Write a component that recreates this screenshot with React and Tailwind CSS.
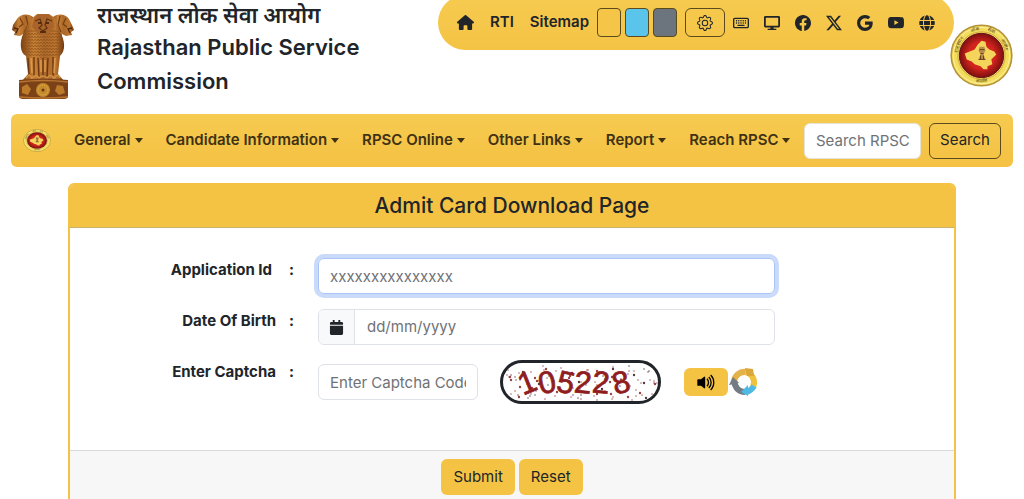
import { useState } from 'react';
import { BsGear, BsFacebook, BsTwitterX, BsGoogle, BsYoutube, BsVolumeUpFill } from 'react-icons/bs';
import { FaDesktop, FaGlobe, FaCalendar } from 'react-icons/fa';
import { FaHouse, FaRegKeyboard } from 'react-icons/fa6';

const menus = ['General', 'Candidate Information', 'RPSC Online', 'Other Links', 'Report', 'Reach RPSC'];

const socials = [
    { label: 'On-screen keyboard', icon: FaRegKeyboard },
    { label: 'Screen reader', icon: FaDesktop },
    { label: 'Facebook', icon: BsFacebook },
    { label: 'X', icon: BsTwitterX },
    { label: 'Google', icon: BsGoogle },
    { label: 'YouTube', icon: BsYoutube },
    { label: 'Language', icon: FaGlobe },
];

const Emblem = () => (
    <svg viewBox="0 0 64 88" className="h-[88px] w-16 shrink-0" role="img" aria-label="State Emblem of India">
        <defs>
            <linearGradient id="stone" x1="0" x2="1">
                <stop offset="0" stopColor="#7a3f12" />
                <stop offset="0.3" stopColor="#c98337" />
                <stop offset="0.55" stopColor="#ab682a" />
                <stop offset="0.8" stopColor="#bd762f" />
                <stop offset="1" stopColor="#6e3610" />
            </linearGradient>
            <pattern id="mane" width="3" height="3" patternUnits="userSpaceOnUse">
                <path d="M0 0L1.5 2L3 0" stroke="#8a4d18" strokeWidth="0.7" fill="none" />
            </pattern>
        </defs>
        {/* side lions */}
        <path d="M22 5C17 1 9 2 6 7L2 13L1 18L4 20L3 23L9 24L12 22L13 34L24 38Z" fill="url(#stone)" />
        <path d="M42 5C47 1 55 2 58 7L61 13L63 18L60 20L61 23L55 24L51 22L50 34L40 38Z" fill="url(#stone)" />
        <path d="M9 6L12 12L8 15M15 4L17 13L13 20M55 6L52 12L56 15M49 4L47 13L50 20" stroke="#75400f" strokeWidth="1.2" fill="none" />
        <path d="M3 16L7 17L5 21M61 16L57 17L59 21" stroke="#4c2408" strokeWidth="1.3" fill="none" />
        {/* centre lion */}
        <path d="M13 20C8 30 9 41 15 44L17 62L11 69H53L47 62L49 44C55 39 54 28 49 20L44 6L38 2H26L20 7Z" fill="url(#stone)" />
        <path d="M13 20C8 30 9 39 15 43Q32 49 48 43C54 38 53 28 48 20L42 17L32 24L22 17Z" fill="url(#mane)" />
        <path d="M23 6L27 2H37L42 7L43 15L38 21L32 24L26 21L21 15Z" fill="#a8642a" />
        <path d="M24 9L29 7L31 13L28 16L32 19L36 16L34 13L36 7L41 9" stroke="#643410" strokeWidth="1.3" fill="none" />
        <path d="M27 11H30M35 11H38M29 20H35" stroke="#3d1b06" strokeWidth="1.5" />
        {/* legs */}
        <path d="M23 45V64M27 46L28 65M32 46V65M37 46L36 65M42 45V64M17 46L18 62" stroke="#6e3610" strokeWidth="1.4" />
        <path d="M20 46L21 61M30 48V60M34 48V60M44 46L43 61" stroke="#dc9a4d" strokeWidth="1.5" />
        <path d="M15 66Q18 61 21 66Q25 61 28 66Q32 62 36 66Q40 61 43 66Q47 61 49 66" stroke="#cf9045" strokeWidth="1.6" fill="none" />
        {/* abacus */}
        <path d="M8 68Q32 65 57 68V84Q57 87 53 87H12Q8 87 8 84Z" fill="#7c4217" />
        <path d="M8 70Q32 67 57 70M8 85Q32 87 57 85" stroke="#b87531" strokeWidth="1.5" fill="none" />
        <path d="M11 75L16 72L20 77L17 83L11 81ZM46 73L52 74L54 81L48 83L44 79Z" fill="#bb7b2b" />
        <circle cx="32" cy="78" r="7" fill="#c58a2d" />
        <circle cx="32" cy="78" r="5" fill="none" stroke="#e8b950" strokeWidth="1" strokeDasharray="1 1" />
        <circle cx="32" cy="78" r="1.5" fill="#6e3610" />
    </svg>
);

const Seal = ({ className, id }) => (
    <svg viewBox="0 0 64 64" preserveAspectRatio="none" className={className} role="img" aria-label="RPSC seal">
        <defs>
            <radialGradient id={`${id}-red`}>
                <stop offset="0.6" stopColor="#d2231d" />
                <stop offset="1" stopColor="#7c1010" />
            </radialGradient>
            <path id={`${id}-arc`} d="M9 37A24 24 0 1 1 55 37" />
            <path id={`${id}-foot`} d="M18 56Q32 63 46 56" />
        </defs>
        <circle cx="32" cy="32" r="30.8" fill="#f3dc5c" stroke="#b4923a" strokeWidth="1.6" />
        <circle cx="32" cy="32" r="28.6" fill="none" stroke="#fbf0a0" strokeWidth="1" />
        <circle cx="32" cy="32" r="24" fill="#f9e577" stroke="#cfa93a" strokeWidth="1" />
        <circle cx="32" cy="32" r="22.5" fill={`url(#${id}-red)`} stroke="#671313" strokeWidth="1" />
        <path d="M32 17L36 18L37 23L40 26L45 28L47 31L42 36L43 41L38 43L38 46L34 46L31 43L25 41L22 38L17 36L15 30L25 26L28 21Z" fill="#f5d45b" />
        <path d="M30 23H35L36 27L34 31L36 36H29L31 31L29 27Z" fill="#ba8d47" />
        <path d="M30 26H35M31 30H34M29 36H36M31 32V36M34 32V36" stroke="#664023" strokeWidth="1" />
        <g fontSize="5" fill="#4c3c12" fontFamily="'Noto Sans', sans-serif" textAnchor="middle">
            <text>
                <textPath href={`#${id}-arc`} startOffset="18%">राजस्थान</textPath>
            </text>
            <text>
                <textPath href={`#${id}-arc`} startOffset="43%">लोक</textPath>
            </text>
            <text>
                <textPath href={`#${id}-arc`} startOffset="61%">सेवा</textPath>
            </text>
            <text>
                <textPath href={`#${id}-arc`} startOffset="82%">आयोग</textPath>
            </text>
            <text>
                <textPath href={`#${id}-foot`} startOffset="50%">अजमेर</textPath>
            </text>
        </g>
    </svg>
);

const captchaDigits = [
    { char: '1', x: 24, tilt: -22 },
    { char: '0', x: 44, tilt: -12 },
    { char: '5', x: 63, tilt: 12 },
    { char: '2', x: 80, tilt: 5 },
    { char: '2', x: 98, tilt: 5 },
    { char: '8', x: 118, tilt: -14 },
];

// pseudo random noise dots, same on each render
const noise = Array.from({ length: 120 }, (_, i) => ({
    x: (i * 61 + ((i * i * 7) % 23)) % 155,
    y: (i * 29 + ((i * i * 5) % 17)) % 38,
    r: i % 4 === 0 ? 1.2 : 0.7,
}));

const Captcha = () => (
    <svg viewBox="0 0 155 38" className="h-11 w-[161px] shrink-0 rounded-full border-[3px] border-[#212529] bg-white" role="img" aria-label="Captcha code">
        {noise.map((dot, i) => (
            <circle key={i} cx={dot.x} cy={dot.y} r={dot.r} fill={i % 3 ? '#9c4343' : '#54383a'} />
        ))}
        {captchaDigits.map((d, i) => (
            <text key={i} x={d.x} y="30" transform={`rotate(${d.tilt} ${d.x} 19)`} fontSize="31" fill="#8f1d20" stroke="#8f1d20" strokeWidth="0.8" fontFamily="'Liberation Sans', sans-serif" textAnchor="middle">
                {d.char}
            </text>
        ))}
    </svg>
);

const RefreshIcon = () => (
    <svg viewBox="0 0 30 30" className="size-[30px]" fill="none">
        <path d="M5 15A10.5 10.5 0 0 1 17 5" stroke="#e3b24a" strokeWidth="6" />
        <path d="M16 5A10.5 10.5 0 0 1 24 20" stroke="#efc13d" strokeWidth="6" />
        <path d="M16 1L24 2L25 9L18 9Z" fill="#dba73b" />
        <path d="M25 19Q22 24 17 25" stroke="#4fb9e6" strokeWidth="6" />
        <path d="M16 25Q7 25 5 14" stroke="#737b83" strokeWidth="6" />
        <path d="M19 18L12 25L19 29Z" fill="#4fb9e6" />
        <path d="M0 18L4 10L10 16Z" fill="#737b83" />
    </svg>
);

const Field = ({ label, htmlFor, children }) => (
    <div className="grid grid-cols-[248fr_457fr_179fr] items-start">
        <label htmlFor={htmlFor} className="flex justify-end pr-6 font-bold leading-6">
            {label}
            <span className="w-[18px] text-right">:</span>
        </label>
        {children}
    </div>
);

const App = () => {
    const [form, setForm] = useState({ applicationId: '', dob: '', captcha: '' });

    const handleChange = (e) => {
        setForm({ ...form, [e.target.name]: e.target.value });
    };

    const handleReset = () => {
        setForm({ applicationId: '', dob: '', captcha: '' });
    };

    return (
        <div className="h-screen overflow-hidden bg-white px-[11px] font-['Inter','Noto_Sans',sans-serif] text-[15px] text-[#212529]">
            <header className="flex h-[114px] items-start">
                <div className="pt-3">
                    <Emblem />
                </div>
                <h1 className="w-[300px] pl-[22px] text-[22px] font-semibold leading-[34px]">
                    <span className="block leading-[30px]">राजस्थान लोक सेवा आयोग</span>
                    Rajasthan Public Service Commission
                </h1>
                <div className="-mt-[5px] ml-auto flex h-[55px] items-center rounded-full bg-linear-to-b from-[#f6cb50] to-[#f4c344] px-[19px]">
                    <a href="#home" aria-label="Home"><FaHouse size={17} /></a>
                    <a href="#rti" className="ml-4 font-semibold">RTI</a>
                    <a href="#sitemap" className="ml-4 font-semibold">Sitemap</a>
                    <div className="ml-2 flex gap-1">
                        <button aria-label="Yellow theme" className="h-[29px] w-6 rounded border border-[#5b4a1c] bg-[#f5c548]" />
                        <button aria-label="Blue theme" className="h-[29px] w-6 rounded border border-[#5b4a1c] bg-[#5bc4ea]" />
                        <button aria-label="Grey theme" className="h-[29px] w-6 rounded border border-[#5b4a1c] bg-[#6c757d]" />
                    </div>
                    <button aria-label="Settings" className="ml-2 flex h-[29px] w-10 items-center justify-center rounded-md border border-[#5b4a1c]">
                        <BsGear size={16} />
                    </button>
                    <div className="ml-2 flex gap-[15px]">
                        {socials.map(({ label, icon: Icon }) => (
                            <a key={label} href="#social" aria-label={label}><Icon size={16} /></a>
                        ))}
                    </div>
                </div>
                <Seal id="seal" className="-ml-1 mt-6 size-[63px] shrink-0" />
            </header>

            <nav className="flex h-[53px] items-center rounded-md bg-linear-to-b from-[#f6cb50] to-[#f4c143] px-3">
                <Seal id="nav-seal" className="h-[23px] w-7 shrink-0" />
                <ul className="ml-[23px] flex gap-[23px]">
                    {menus.map((menu) => (
                        <li key={menu}>
                            <button className="flex items-center gap-1 whitespace-nowrap font-semibold text-[#3f3212]">
                                {menu}
                                <span className="border-x-4 border-t-[5px] border-x-transparent border-t-[#3f3212]" />
                            </button>
                        </li>
                    ))}
                </ul>
                <form className="ml-auto flex gap-2" onSubmit={(e) => e.preventDefault()}>
                    <input type="text" aria-label="Search RPSC" placeholder="Search RPSC" className="h-9 w-[117px] rounded-md border border-[#e6e2d5] bg-white px-[11px] placeholder:text-[#6f7276]" />
                    <button className="h-9 w-[72px] rounded-md border border-[#5b4a1c]">Search</button>
                </form>
            </nav>

            <main className="mx-[57px] mt-4 overflow-hidden rounded-md border-2 border-[#f4c344]">
                <h2 className="border-b border-[#c9b36c] bg-[#f4c344] text-center text-[21px] font-medium leading-[42px]">
                    Admit Card Download Page
                </h2>
                <form onSubmit={(e) => e.preventDefault()} onReset={handleReset}>
                    <div className="flex flex-col gap-[15px] pb-[46px] pt-[30px]">
                        <Field label={<span className="pr-1">Application Id</span>} htmlFor="applicationId">
                            <input
                                id="applicationId"
                                name="applicationId"
                                value={form.applicationId}
                                onChange={handleChange}
                                placeholder="xxxxxxxxxxxxxxx"
                                className="h-9 rounded-md border border-[#a9c3f5] px-[11px] shadow-[0_0_0_4px_#c9dafb] outline-none placeholder:text-[#6f7276]"
                            />
                        </Field>
                        <Field label="Date Of Birth" htmlFor="dob">
                            <div className="flex h-9 overflow-hidden rounded-md border border-[#dee2e6]">
                                <span className="flex w-9 items-center justify-center border-r border-[#dee2e6] bg-[#f8f9fa]">
                                    <FaCalendar size={15} />
                                </span>
                                <input
                                    id="dob"
                                    name="dob"
                                    value={form.dob}
                                    onChange={handleChange}
                                    placeholder="dd/mm/yyyy"
                                    className="min-w-0 flex-1 px-3 outline-none placeholder:text-[#6f7276]"
                                />
                            </div>
                        </Field>
                        <Field label="Enter Captcha" htmlFor="captcha">
                            <div className="flex items-center">
                                <input
                                    id="captcha"
                                    name="captcha"
                                    value={form.captcha}
                                    onChange={handleChange}
                                    placeholder="Enter Captcha Code"
                                    className="h-9 w-40 rounded-md border border-[#dee2e6] px-[11px] placeholder:text-[#6f7276]"
                                />
                                <div className="ml-[22px]">
                                    <Captcha />
                                </div>
                                <button type="button" aria-label="Play captcha" className="ml-[23px] flex h-7 w-11 items-center justify-center rounded-md bg-[#f4c344] text-black">
                                    <BsVolumeUpFill size={21} />
                                </button>
                                <button type="button" aria-label="Refresh captcha" className="ml-px">
                                    <RefreshIcon />
                                </button>
                            </div>
                        </Field>
                    </div>
                    <div className="flex justify-center gap-1 border-t border-[#d9d9d9] bg-[#f7f7f7] py-2">
                        <button type="submit" className="h-9 rounded-md bg-[#f4c344] px-3">Submit</button>
                        <button type="reset" className="h-9 rounded-md bg-[#f4c344] px-3">Reset</button>
                    </div>
                </form>
            </main>
        </div>
    );
};

export default App;
